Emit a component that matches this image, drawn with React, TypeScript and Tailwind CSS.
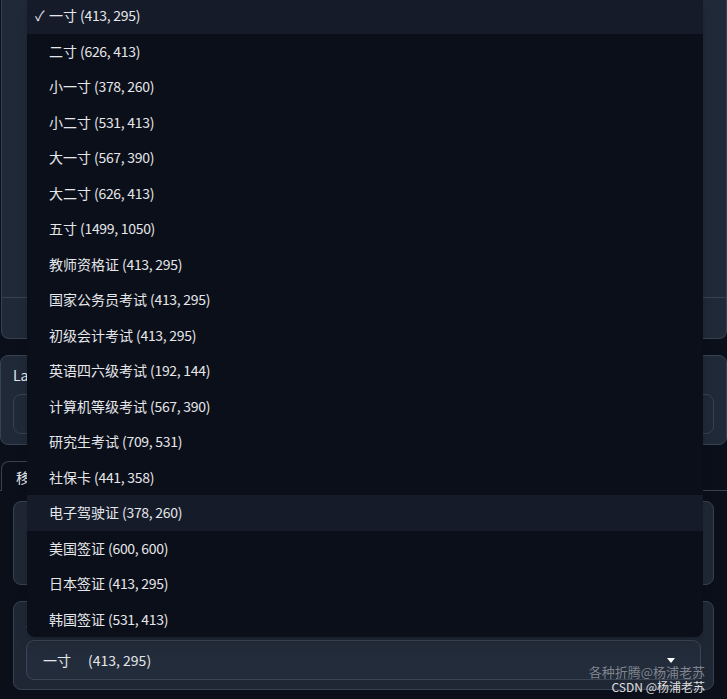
import React from 'react'

const sizes: [string, string][] = [
  ['一寸', '(413, 295)'],
  ['二寸', '(626, 413)'],
  ['小一寸', '(378, 260)'],
  ['小二寸', '(531, 413)'],
  ['大一寸', '(567, 390)'],
  ['大二寸', '(626, 413)'],
  ['五寸', '(1499, 1050)'],
  ['教师资格证', '(413, 295)'],
  ['国家公务员考试', '(413, 295)'],
  ['初级会计考试', '(413, 295)'],
  ['英语四六级考试', '(192, 144)'],
  ['计算机等级考试', '(567, 390)'],
  ['研究生考试', '(709, 531)'],
  ['社保卡', '(441, 358)'],
  ['电子驾驶证', '(378, 260)'],
  ['美国签证', '(600, 600)'],
  ['日本签证', '(413, 295)'],
  ['韩国签证', '(531, 413)'],
]

export default function App() {
  return (
    <div className="relative w-[727px] h-[699px] overflow-hidden bg-[#0b0f19] text-[14px] text-[#e5e7eb] font-[family-name:'Noto_Sans_CJK_SC','Noto_Sans',sans-serif]">
      {/* background blocks */}
      <div className="flex flex-col">
        <div className="ml-px h-[339px] rounded-b-lg border border-t-0 border-[#374151] bg-[#1f2937]">
          <div className="h-[298px] border-b border-[#374151]" />
        </div>

        <div className="mt-[16px] h-[90px] w-[727px] rounded-lg border border-[#374151] bg-[#1f2937] px-3 pt-[9px]">
          <div className="h-[20px] leading-[20px] text-[14px]">Language</div>
          <div className="mt-[9px] h-[40px] rounded-lg border border-[#374151] bg-[#1f2937]" />
        </div>

        <div className="mt-[16px] flex h-[30px] border-b border-[#374151]">
          <div className="ml-px -mb-px h-[30px] rounded-t-lg border border-b-0 border-[#374151] bg-[#0b0f19] px-[14px] leading-[30px]">移除背景</div>
        </div>

        <div className="ml-[13px] mt-[10px] h-[84px] w-[701px] rounded-lg border border-[#374151] bg-[#1f2735] px-3 pt-[4px]">
          <div className="h-[20px] leading-[20px] text-[#d45b5b]">尺寸</div>
        </div>

        <div className="ml-[13px] mt-[16px] h-[89px] w-[701px] rounded-lg border border-[#374151] bg-[#1f2735] px-3 pt-[8px]">
          <div className="h-[20px] leading-[20px] text-[#9ca3af]">尺寸列表</div>
          <div className="mt-[10px] flex h-[40px] items-center rounded-lg border border-[#3b4556] bg-[#232c3a] pl-4 pr-[25px]">
            <span>一寸</span>
            <span className="ml-[17px]">(413, 295)</span>
            <span className="ml-auto h-0 w-0 border-x-[4px] border-t-[5px] border-x-transparent border-t-white" />
          </div>
        </div>
      </div>

      {/* open dropdown menu */}
      <ul className="absolute left-[27px] top-[-2px] w-[676px] overflow-hidden rounded-b-lg bg-[#0b0f19] shadow-lg">
        {sizes.map(([name, dim], i) => (
          <li
            key={name}
            className={`relative flex h-[35.5px] items-center pl-[22px] ${i === 0 || i === 14 ? 'bg-[#151b29]' : ''}`}
          >
            {i === 0 && <span className="absolute left-[8px]">✓</span>}
            <span>{name}</span>
            <span className="ml-[3px] tracking-[-0.3px]">{dim}</span>
          </li>
        ))}
      </ul>

      {/* watermark */}
      <div className="pointer-events-none absolute right-[22px] top-[663px] text-[13px] leading-[18px] text-[#9a9ea6]/80">各种折腾@杨浦老苏</div>
      <div className="pointer-events-none absolute right-[22px] top-[678px] text-[12px] leading-[17px] text-[#e0e0e0]">CSDN @杨浦老苏</div>
    </div>
  )
}
